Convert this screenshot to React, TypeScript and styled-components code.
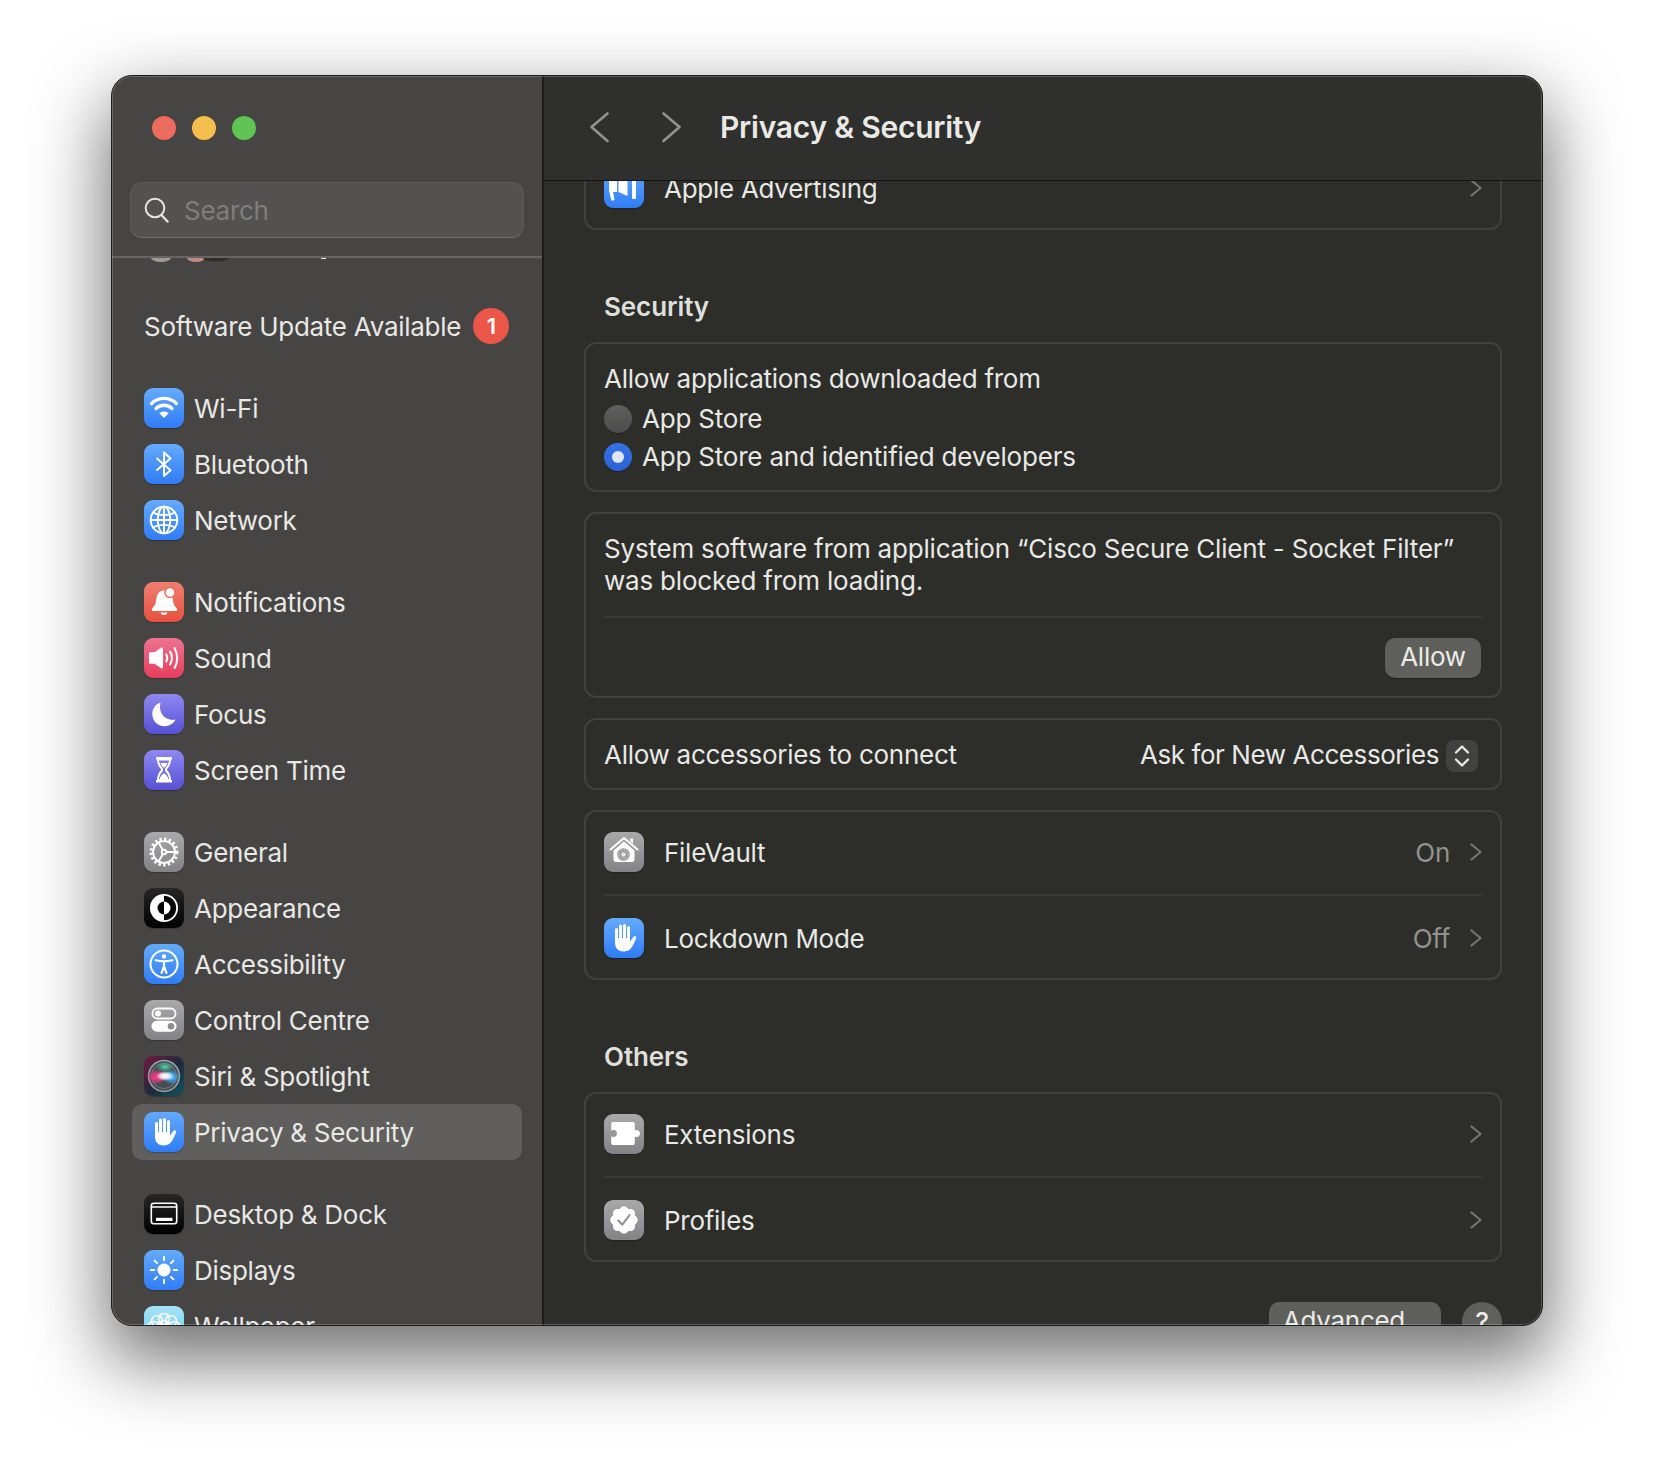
import React from "react";
import styled, { createGlobalStyle } from "styled-components";

const Global = createGlobalStyle`
  html, body { margin: 0; padding: 0; background: #fff; }
  body { font-family: Inter, "Noto Sans", "Liberation Sans", sans-serif; -webkit-font-smoothing: antialiased; }
  * { box-sizing: border-box; }
`;

const Page = styled.div`
  width: 1654px;
  height: 1474px;
  padding: 75px 111px 0;
  background: #fff;
  overflow: hidden;
`;

const Window = styled.div`
  position: relative;
  width: 1432px;
  height: 1251px;
  display: flex;
  border: 1px solid #1d1d1c;
  border-radius: 21px;
  overflow: hidden;
  background: #2d2e2a;
  box-shadow: 0 30px 72px 5px rgba(0, 0, 0, 0.56);
  color: #e8e8e5;
  font-size: 26px;
  letter-spacing: -0.27px;
  &::after {
    content: "";
    position: absolute;
    inset: 0;
    border: 1px solid rgba(255, 255, 255, 0.2);
    border-radius: 20px;
    pointer-events: none;
  }
`;

const Sidebar = styled.aside`
  width: 432px;
  flex: none;
  display: flex;
  flex-direction: column;
  background: #464544;
  border-right: 2px solid #1b1b1a;
`;

const Traffic = styled.div`
  display: flex;
  gap: 16px;
  padding: 40px 0 42px 40px;
`;

const Light = styled.span<{ $c: string }>`
  width: 24px;
  height: 24px;
  border-radius: 50%;
  background: ${(p) => p.$c};
`;

const SearchBox = styled.div`
  height: 56px;
  margin: 0 18px;
  display: flex;
  align-items: center;
  gap: 14px;
  padding-left: 13px;
  border-radius: 12px;
  background: #535250;
  border: 1.5px solid #5c5b59;
  border-bottom-color: #6e6d6b;
  color: #7f7e7c;
`;

const SideRule = styled.div`
  height: 2px;
  margin-top: 18px;
  background: #666563;
  flex: none;
`;

const SideScroll = styled.div`
  flex: 1;
  min-height: 0;
  overflow: hidden;
`;

const Remnant = styled.svg`
  display: block;
  margin-left: 32px;
`;

const UpdateRow = styled.div`
  height: 56px;
  margin-top: 36px;
  padding-left: 32px;
  display: flex;
  align-items: center;
  gap: 12px;
`;

const Badge = styled.span`
  width: 36px;
  height: 36px;
  border-radius: 50%;
  background: #ea5647;
  color: #fff;
  display: flex;
  align-items: center;
  justify-content: center;
  font-size: 22px;
  font-weight: 600;
`;

const Group = styled.div`
  margin-top: 26px;
`;

const SideItem = styled.div<{ $active?: boolean }>`
  height: 56px;
  margin: 0 20px;
  padding-left: 12px;
  display: flex;
  align-items: center;
  gap: 10px;
  border-radius: 10px;
  background: ${(p) => (p.$active ? "#605f5d" : "transparent")};
`;

const Tile = styled.span<{ $bg: string }>`
  width: 40px;
  height: 40px;
  flex: none;
  display: block;
  border-radius: 9px;
  background: ${(p) => p.$bg};
  box-shadow: 0 1px 1px rgba(0, 0, 0, 0.25);
  overflow: hidden;
  svg { display: block; }
`;

const Main = styled.main`
  flex: 1;
  min-width: 0;
  display: flex;
  flex-direction: column;
`;

const Header = styled.header`
  height: 105px;
  flex: none;
  display: flex;
  align-items: center;
  padding: 0 0 3px 46px;
  background: #2f302e;
  border-bottom: 1px solid #121211;
`;

const NavButton = styled.svg`
  display: block;
  & + & { margin-left: 52px; }
`;

const Title = styled.h1`
  margin: 0 0 0 38px;
  font-size: 30px;
  font-weight: 630;
  letter-spacing: -0.24px;
  color: #e9e9e6;
`;

const Content = styled.div`
  flex: 1;
  min-height: 0;
  overflow: hidden;
  padding: 0 40px;
`;

const Card = styled.section<{ $mt?: number }>`
  margin-top: ${(p) => p.$mt ?? 20}px;
  border: 2px solid #41423e;
  border-radius: 12px;
`;

const Heading = styled.h2`
  height: 32px;
  line-height: 32px;
  margin: 61px 0 19px 20px;
  font-size: 26px;
  font-weight: 600;
  letter-spacing: -0.1px;
  color: #dfdfdc;
`;

const RowDivider = styled.div`
  height: 2px;
  margin: 2px 18px;
  background: #393a36;
`;

const NavRow = styled.div`
  height: 80px;
  padding: 0 18px;
  display: flex;
  align-items: center;
  gap: 20px;
`;

const RowLabel = styled.span`
  flex: 1;
`;

const RowValue = styled.span`
  color: #92928f;
`;

const Chev = styled.svg`
  display: block;
`;

const RadioCard = styled.div`
  padding: 20px 18px 19px;
  display: flex;
  flex-direction: column;
`;

const CardLine = styled.div`
  line-height: 30px;
`;

const RadioRow = styled.label<{ $mt: number }>`
  display: flex;
  align-items: center;
  gap: 10px;
  height: 28px;
  margin-top: ${(p) => p.$mt}px;
`;

const RadioText = styled.span`
  padding-bottom: 2px;
  letter-spacing: -0.2px;
`;

const Radio = styled.span<{ $on?: boolean }>`
  width: 28px;
  height: 28px;
  border-radius: 50%;
  display: flex;
  align-items: center;
  justify-content: center;
  background: ${(p) => (p.$on ? "linear-gradient(#3572e6,#2b62d4)" : "linear-gradient(#5f5f5d,#4c4c4a)")};
  box-shadow: 0 1px 1px rgba(0, 0, 0, 0.3);
  &::after {
    content: "";
    display: ${(p) => (p.$on ? "block" : "none")};
    width: 12px;
    height: 12px;
    border-radius: 50%;
    background: #dfe6f8;
  }
`;

const Message = styled.p`
  margin: 0;
  padding: 19px 18px 0;
  line-height: 32px;
  letter-spacing: -0.2px;
`;

const MessageRule = styled.div`
  height: 2px;
  margin: 19px 18px 20px;
  background: #393a36;
`;

const ActionRow = styled.div`
  display: flex;
  justify-content: flex-end;
  padding: 0 19px 18px;
`;

const PushButton = styled.button<{ $w: number }>`
  width: ${(p) => p.$w}px;
  height: 40px;
  padding: 0 0 3px;
  border: none;
  border-radius: 10px;
  background: #5f605b;
  color: #ebebe8;
  font: inherit;
  letter-spacing: inherit;
  box-shadow: 0 1px 1px rgba(0, 0, 0, 0.3);
`;

const SelectRow = styled.div`
  height: 68px;
  padding: 0 22px 0 18px;
  display: flex;
  align-items: center;
`;

const SelectValue = styled.span`
  margin-right: 7px;
  letter-spacing: -0.43px;
`;

const Stepper = styled.span`
  width: 32px;
  height: 32px;
  margin-top: 4px;
  border-radius: 8px;
  background: #41413f;
  display: flex;
  align-items: center;
  justify-content: center;
`;

const Footer = styled.div`
  display: flex;
  justify-content: flex-end;
  gap: 21px;
  margin-top: 40px;
`;

const HelpButton = styled.button`
  width: 40px;
  height: 40px;
  padding: 0 0 2px;
  border: none;
  border-radius: 50%;
  background: #5f605b;
  color: #ebebe8;
  font: inherit;
  font-weight: 500;
`;

const W = { fill: "#fff" };
const S = { fill: "none", stroke: "#fff", strokeLinecap: "round" as const, strokeLinejoin: "round" as const };

const Svg: React.FC<{ children: React.ReactNode }> = ({ children }) => (
  <svg width="40" height="40" viewBox="0 0 40 40">{children}</svg>
);

const Hand = () => (
  <Svg>
    <g {...S} strokeWidth="3">
      <path d="M12.500 11.500v10" />
      <path d="M16.500 8v13" />
      <path d="M20.500 7.500v13.500" />
      <path d="M24.500 9.500v12.500" />
    </g>
    <path {...W} d="M11 20h15v3.500l2.600-3.600c.7-1.200 1.900-2 3-1.400.9.5.8 1.500.3 2.600l-3.200 6.700C27 31.300 24 33.500 20 33.500c-5.500 0-9-3.500-9-8.500z" />
  </Svg>
);

const icons: Record<string, React.ReactNode> = {
  wifi: (
    <Svg>
      <g {...S} strokeWidth="3.3">
        <path d="M7.500 15.500a18 18 0 0 1 25 0" />
        <path d="M12 20.500a11.500 11.500 0 0 1 16 0" />
      </g>
      <path {...W} d="M15.300 25.200c2.700-2.300 6.700-2.300 9.400 0L20 30z" />
    </Svg>
  ),
  bluetooth: (
    <Svg>
      <path {...S} strokeWidth="2" d="M13 14.500l13.500 11.700L20 32V8.500l6.500 6-13.500 11.500" />
    </Svg>
  ),
  network: (
    <Svg>
      <g {...S} strokeWidth="1.900">
        <circle cx="20" cy="20" r="13.300" />
        <ellipse cx="20" cy="20" rx="6.300" ry="13.300" />
        <path d="M20 6.700v26.600" />
        <path d="M6.700 20h26.600" />
        <path d="M9 12.500c6 3.500 16 3.500 22 0" />
        <path d="M9 27.500c6-3.500 16-3.500 22 0" />
      </g>
    </Svg>
  ),
  bell: (
    <Svg>
      <path {...W} d="M20 8.500c-5.500 0-7.300 4.500-7.800 9.500-.4 4.300-1.700 6.200-4.200 8.400V29h25v-2.600c-2.400-2.100-3.700-4-4.100-8.400C28.400 12.500 25.500 8.500 20 8.500z" />
      <path {...W} d="M16.500 30.500h7c-.5 1.700-1.800 2.500-3.500 2.500s-3-.8-3.500-2.500z" />
      <circle cx="26" cy="10.500" r="5.800" fill="#ec6c5c" />
      <circle cx="26" cy="10.500" r="4.300" fill="#fff" />
    </Svg>
  ),
  sound: (
    <Svg>
      <path {...W} d="M5 15.500c0-.8.600-1.300 1.300-1.300H10.500L17 9.800c.8-.5 2-.1 2 1v18.400c0 1.100-1.200 1.500-2 1l-6.500-4.400H6.300c-.7 0-1.300-.5-1.300-1.300z" />
      <g {...S} strokeWidth="2">
        <path d="M22.300 16.500c1.200 2.200 1.200 4.800 0 7" />
        <path d="M26 13.500c2.400 4 2.400 9 0 13" />
        <path d="M30.500 10c3.600 6 3.600 14 0 20" />
      </g>
    </Svg>
  ),
  moon: (
    <Svg>
      <path {...W} d="M16.500 8.500C11.500 10 8.300 14.800 8.300 20c0 6.900 5.400 12.200 12.100 12.200 4.900 0 9-2.700 11.300-6.700-.6.200-2.100.4-3.200.4-7 0-12.500-5.400-12.500-12.300 0-1.800.2-3.300.5-5.100z" />
    </Svg>
  ),
  hourglass: (
    <Svg>
      <path {...W} d="M12 7h16v2.500H12zM12 30h16v2.500H12z" />
      <path {...S} strokeWidth="2" d="M14 9.500c0 4.500 1.500 7 4 9.500v1.500c-2.500 2.500-4 5-4 9.500h12c0-4.500-1.500-7-4-9.500V19c2.500-2.500 4-5 4-9.500z" />
      <path {...W} d="M15.500 29.500c.6-3 2.200-4.600 4.500-6.500 2.300 1.900 3.900 3.500 4.500 6.500zM16.500 13h7c-.7 2-1.800 3.500-3.500 5-1.700-1.500-2.800-3-3.500-5z" />
    </Svg>
  ),
  gear: (
    <Svg>
      <circle cx="20" cy="20" r="12.800" fill="none" stroke="#fff" strokeWidth="3.400" strokeDasharray="2.300 2.320" />
      <g {...S} strokeWidth="1.900">
        <circle cx="20" cy="20" r="10.900" />
        <circle cx="20" cy="20" r="2.300" />
        <path d="M22.200 20H31M18.900 18l-4.400-7.500M18.900 22l-4.400 7.500" />
      </g>
    </Svg>
  ),
  appearance: (
    <Svg>
      <circle cx="20" cy="20" r="14" fill="#fff" />
      <path d="M20 7.800a12.200 12.200 0 0 1 0 24.400z" fill="#050505" />
      <circle cx="20" cy="20" r="6.500" fill="#fff" />
      <path d="M20 13.500a6.500 6.500 0 0 0 0 13z" fill="#050505" />
    </Svg>
  ),
  accessibility: (
    <Svg>
      <circle {...S} strokeWidth="2" cx="20" cy="20" r="13.500" />
      <circle {...W} cx="20" cy="12.500" r="2.200" />
      <path {...S} strokeWidth="2" d="M11.500 16.200c5.500 1.200 11.500 1.200 17 0" />
      <path {...S} strokeWidth="2.200" d="M20 17.500v5.500M20 22.500l-2.500 6.500M20 22.500l2.500 6.500" />
    </Svg>
  ),
  control: (
    <Svg>
      <rect {...S} strokeWidth="1.800" x="8.400" y="8.500" width="23.200" height="10" rx="5" />
      <circle {...W} cx="14" cy="13.500" r="3" />
      <rect {...W} x="7.500" y="20.700" width="25" height="11" rx="5.500" />
      <circle cx="27" cy="26.200" r="3.300" fill="#8e8e92" />
    </Svg>
  ),
  siri: (
    <Svg>
      <defs>
        <radialGradient id="siriPink" cx="0.5" cy="0.5" r="0.5">
          <stop offset="0" stopColor="#ff3f8f" />
          <stop offset="0.5" stopColor="#e8357f" stopOpacity="0.8" />
          <stop offset="1" stopColor="#e8357f" stopOpacity="0" />
        </radialGradient>
        <radialGradient id="siriBlue" cx="0.5" cy="0.5" r="0.5">
          <stop offset="0" stopColor="#58c8ff" />
          <stop offset="0.5" stopColor="#3fa8f2" stopOpacity="0.8" />
          <stop offset="1" stopColor="#3fa8f2" stopOpacity="0" />
        </radialGradient>
        <radialGradient id="siriGreen" cx="0.5" cy="0.5" r="0.5">
          <stop offset="0" stopColor="#4fe0ae" />
          <stop offset="1" stopColor="#3fd6a0" stopOpacity="0" />
        </radialGradient>
        <radialGradient id="siriWhite" cx="0.5" cy="0.5" r="0.5">
          <stop offset="0" stopColor="#fff" />
          <stop offset="0.45" stopColor="#fff" stopOpacity="0.85" />
          <stop offset="1" stopColor="#fff" stopOpacity="0" />
        </radialGradient>
      </defs>
      <circle cx="20" cy="20" r="16.500" fill="#454e54" />
      <circle cx="20" cy="20" r="15.300" fill="none" stroke="#a9b3b8" strokeWidth="1.200" />
      <circle cx="20" cy="20" r="12.500" fill="none" stroke="#6e7a80" strokeWidth="1" />
      <ellipse cx="12.500" cy="21" rx="10" ry="7.500" fill="url(#siriPink)" />
      <ellipse cx="27.500" cy="21" rx="8" ry="7.500" fill="url(#siriBlue)" />
      <ellipse cx="21" cy="11" rx="9" ry="5" fill="url(#siriGreen)" />
      <ellipse cx="21" cy="20" rx="9" ry="5" fill="url(#siriWhite)" />
    </Svg>
  ),
  hand: <Hand />,
  dock: (
    <Svg>
      <rect {...S} strokeWidth="1.600" x="7.300" y="9.300" width="25.400" height="20.400" rx="2.500" />
      <path {...S} strokeWidth="1.500" d="M7.500 13h25" />
      <rect {...W} x="12" y="23.800" width="16.500" height="3.200" />
    </Svg>
  ),
  sun: (
    <Svg>
      <circle {...W} cx="20" cy="20" r="6.500" />
      <g {...S} strokeWidth="1.900">
        <path d="M20 6.700v3.600M20 29.700v3.600M6.700 20h3.600M29.700 20h3.600M10.600 10.600l2.500 2.500M26.900 26.900l2.500 2.500M10.600 29.400l2.500-2.500M26.900 13.100l2.500-2.500" />
      </g>
    </Svg>
  ),
  flower: (
    <Svg>
      <g {...S} strokeWidth="1.600">
        <circle cx="20" cy="13" r="5.500" />
        <circle cx="13" cy="15" r="5.500" />
        <circle cx="27" cy="15" r="5.500" />
        <circle cx="9.500" cy="21" r="5.500" />
        <circle cx="30.500" cy="21" r="5.500" />
        <circle cx="20" cy="20" r="5.500" />
      </g>
    </Svg>
  ),
  vault: (
    <Svg>
      <path {...W} d="M9.500 18.500 20 9.500l10.500 9v9c0 1.500-1 2.500-2.500 2.500H12c-1.500 0-2.500-1-2.500-2.500z" />
      <path {...S} strokeWidth="2" d="M6.500 17.500 20 6l13.500 11.500" />
      <path {...W} d="M26 6.500h3v5l-3-2.500z" />
      <circle cx="19.500" cy="22.500" r="6.300" fill="#98989c" />
      <circle cx="19.500" cy="22.500" r="4.600" fill="none" stroke="#e9e9ea" strokeWidth="1" strokeDasharray="1.200 1.200" />
      <circle cx="19.500" cy="22.500" r="2.200" fill="#e9e9ea" />
    </Svg>
  ),
  puzzle: (
    <Svg>
      <path {...W} d="M9.500 8h19c1.400 0 2.300.9 2.300 2.300v6.200c.5-.4 1-.6 1.600-.6 2 0 3.600 1.600 3.600 3.600s-1.600 3.600-3.600 3.600c-.6 0-1.100-.2-1.600-.6v6.200c0 1.400-.9 2.300-2.300 2.300h-19c-1.400 0-2.300-.9-2.300-2.300V10.300C7.200 8.900 8.100 8 9.500 8z" />
      <circle cx="9.500" cy="19.500" r="3.400" fill="#98989c" />
    </Svg>
  ),
  badge: (
    <Svg>
      <rect {...W} x="9" y="9" width="22" height="22" rx="4.500" />
      <rect {...W} x="9" y="9" width="22" height="22" rx="4.500" transform="rotate(45 20 20)" />
      <path fill="none" stroke="#8f8f93" strokeWidth="2" strokeLinecap="round" strokeLinejoin="round" d="M14.300 20.500l4 4.200 7.300-9.700" />
    </Svg>
  ),
  megaphone: (
    <Svg>
      <path {...W} d="M5 10h8v14H9l1.500 7.500c.2 1.400-3 1.500-3.400.2L5.500 24H5z" />
      <path {...W} d="M14.500 9.500l9-3V28l-9-4z" />
      <rect {...W} x="28" y="6" width="4" height="25" rx="1" />
    </Svg>
  ),
};

const blue = "linear-gradient(#64aafd,#2f7cf6)";
const grey = "linear-gradient(#a9a9ac,#838387)";
const black = "linear-gradient(#262626,#000)";
const indigo = "linear-gradient(#8f88f0,#5651d6)";

type Item = { label: string; icon: string; bg: string; active?: boolean };

const groups: Item[][] = [
  [
    { label: "Wi-Fi", icon: "wifi", bg: blue },
    { label: "Bluetooth", icon: "bluetooth", bg: blue },
    { label: "Network", icon: "network", bg: blue },
  ],
  [
    { label: "Notifications", icon: "bell", bg: "linear-gradient(#ef7f70,#e9503f)" },
    { label: "Sound", icon: "sound", bg: "linear-gradient(#ec7390,#e63e5c)" },
    { label: "Focus", icon: "moon", bg: indigo },
    { label: "Screen Time", icon: "hourglass", bg: indigo },
  ],
  [
    { label: "General", icon: "gear", bg: grey },
    { label: "Appearance", icon: "appearance", bg: black },
    { label: "Accessibility", icon: "accessibility", bg: blue },
    { label: "Control Centre", icon: "control", bg: grey },
    { label: "Siri & Spotlight", icon: "siri", bg: "linear-gradient(135deg,#7a1640,#1a2c3c 55%,#0f5560)" },
    { label: "Privacy & Security", icon: "hand", bg: blue, active: true },
  ],
  [
    { label: "Desktop & Dock", icon: "dock", bg: black },
    { label: "Displays", icon: "sun", bg: blue },
    { label: "Wallpaper", icon: "flower", bg: "linear-gradient(#a5e3f8,#6fcdf0)" },
  ],
];

const Chevron = () => (
  <Chev width="12" height="20" viewBox="0 0 12 20">
    <path d="M1.500 2.500l9 7.500-9 7.500" fill="none" stroke="#73746f" strokeWidth="2.200" strokeLinecap="round" strokeLinejoin="round" />
  </Chev>
);

const Row: React.FC<{ icon: string; bg: string; label: string; value?: string }> = ({ icon, bg, label, value }) => (
  <NavRow>
    <Tile $bg={bg}>{icons[icon]}</Tile>
    <RowLabel>{label}</RowLabel>
    {value && <RowValue>{value}</RowValue>}
    <Chevron />
  </NavRow>
);

export default function App() {
  return (
    <Page>
      <Global />
      <Window>
        <Sidebar>
          <Traffic>
            <Light $c="#ed6a5f" />
            <Light $c="#f4bf4f" />
            <Light $c="#5fc454" />
          </Traffic>
          <SearchBox>
            <svg width="26" height="28" viewBox="0 0 26 28">
              <circle cx="11" cy="12" r="9.300" fill="none" stroke="#e4e4e2" strokeWidth="2" />
              <path d="M17.500 19l6 6.500" stroke="#e4e4e2" strokeWidth="2.400" strokeLinecap="round" />
            </svg>
            Search
          </SearchBox>
          <SideRule />
          <SideScroll>
            <Remnant width="220" height="4" viewBox="0 0 220 4">
              <ellipse cx="17" cy="0" rx="10" ry="4" fill="#a09a90" />
              <ellipse cx="52" cy="0" rx="9" ry="4" fill="#c08a80" />
              <ellipse cx="72" cy="0" rx="13" ry="3.500" fill="#2e2d2c" />
              <rect x="177" y="0" width="5" height="1" fill="#eee" />
            </Remnant>
            <UpdateRow>
              Software Update Available
              <Badge>1</Badge>
            </UpdateRow>
            {groups.map((items) => (
              <Group key={items[0].label}>
                {items.map((it) => (
                  <SideItem key={it.label} $active={it.active}>
                    <Tile $bg={it.bg}>{icons[it.icon]}</Tile>
                    {it.label}
                  </SideItem>
                ))}
              </Group>
            ))}
          </SideScroll>
        </Sidebar>
        <Main>
          <Header>
            <NavButton width="20" height="32" viewBox="0 0 20 32">
              <path d="M17.500 2.500 1.500 16l16 14" fill="none" stroke="#92928f" strokeWidth="2.600" strokeLinecap="round" strokeLinejoin="round" />
            </NavButton>
            <NavButton width="20" height="32" viewBox="0 0 20 32">
              <path d="M1.500 2.500 17.500 16l-16 14" fill="none" stroke="#92928f" strokeWidth="2.600" strokeLinecap="round" strokeLinejoin="round" />
            </NavButton>
            <Title>Privacy &amp; Security</Title>
          </Header>
          <Content>
            <Card $mt={-35}>
              <Row icon="megaphone" bg={blue} label="Apple Advertising" />
            </Card>
            <Heading>Security</Heading>
            <Card $mt={0}>
              <RadioCard>
                <CardLine>Allow applications downloaded from</CardLine>
                <RadioRow $mt={11}>
                  <Radio />
                  <RadioText>App Store</RadioText>
                </RadioRow>
                <RadioRow $mt={10}>
                  <Radio $on />
                  <RadioText>App Store and identified developers</RadioText>
                </RadioRow>
              </RadioCard>
            </Card>
            <Card>
              <Message>
                System software from application “Cisco Secure Client - Socket Filter”
                <br />
                was blocked from loading.
              </Message>
              <MessageRule />
              <ActionRow>
                <PushButton $w={96}>Allow</PushButton>
              </ActionRow>
            </Card>
            <Card>
              <SelectRow>
                <RowLabel>Allow accessories to connect</RowLabel>
                <SelectValue>Ask for New Accessories</SelectValue>
                <Stepper>
                  <svg width="18" height="26" viewBox="0 0 18 26">
                    <path d="M3 9.500 9 3.500l6 6M3 16.500l6 6 6-6" fill="none" stroke="#e8e8e5" strokeWidth="2.300" strokeLinecap="round" strokeLinejoin="round" />
                  </svg>
                </Stepper>
              </SelectRow>
            </Card>
            <Card>
              <Row icon="vault" bg={grey} label="FileVault" value="On" />
              <RowDivider />
              <Row icon="hand" bg={blue} label="Lockdown Mode" value="Off" />
            </Card>
            <Heading>Others</Heading>
            <Card $mt={0}>
              <Row icon="puzzle" bg={grey} label="Extensions" />
              <RowDivider />
              <Row icon="badge" bg={grey} label="Profiles" />
            </Card>
            <Footer>
              <PushButton $w={172}>Advanced…</PushButton>
              <HelpButton>?</HelpButton>
            </Footer>
          </Content>
        </Main>
      </Window>
    </Page>
  );
}
